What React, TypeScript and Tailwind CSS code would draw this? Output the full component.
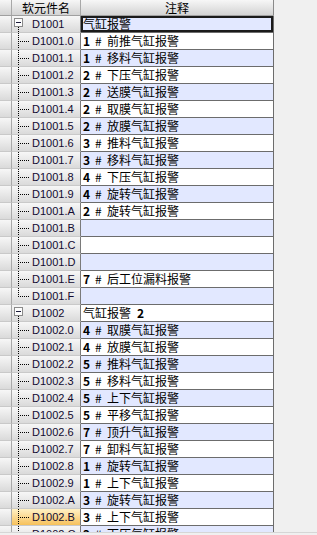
import React from "react";

type Row = { id: string; root?: boolean; last?: boolean; c: string; sel?: boolean };

const rows: Row[] = [
  { id: "D1001", root: true, c: "气缸报警" },
  { id: "D1001.0", c: "1 # 前推气缸报警" },
  { id: "D1001.1", c: "1 # 移料气缸报警" },
  { id: "D1001.2", c: "2 # 下压气缸报警" },
  { id: "D1001.3", c: "2 # 送膜气缸报警" },
  { id: "D1001.4", c: "2 # 取膜气缸报警" },
  { id: "D1001.5", c: "2 # 放膜气缸报警" },
  { id: "D1001.6", c: "3 # 推料气缸报警" },
  { id: "D1001.7", c: "3 # 移料气缸报警" },
  { id: "D1001.8", c: "4 # 下压气缸报警" },
  { id: "D1001.9", c: "4 # 旋转气缸报警" },
  { id: "D1001.A", c: "2 # 旋转气缸报警" },
  { id: "D1001.B", c: "" },
  { id: "D1001.C", c: "" },
  { id: "D1001.D", c: "" },
  { id: "D1001.E", c: "7 # 后工位漏料报警" },
  { id: "D1001.F", c: "", last: true },
  { id: "D1002", root: true, c: "气缸报警 2" },
  { id: "D1002.0", c: "4 # 取膜气缸报警" },
  { id: "D1002.1", c: "4 # 放膜气缸报警" },
  { id: "D1002.2", c: "5 # 推料气缸报警" },
  { id: "D1002.3", c: "5 # 移料气缸报警" },
  { id: "D1002.4", c: "5 # 上下气缸报警" },
  { id: "D1002.5", c: "5 # 平移气缸报警" },
  { id: "D1002.6", c: "7 # 顶升气缸报警" },
  { id: "D1002.7", c: "7 # 卸料气缸报警" },
  { id: "D1002.8", c: "1 # 旋转气缸报警" },
  { id: "D1002.9", c: "1 # 上下气缸报警" },
  { id: "D1002.A", c: "3 # 旋转气缸报警" },
  { id: "D1002.B", c: "3 # 上下气缸报警", sel: true },
  { id: "D1002.C", c: "2 # 下压气缸报警" },
];

function Connector({ row }: { row: Row }) {
  return (
    <svg width="20" height="16" viewBox="0 0 20 16" className="shrink-0" shapeRendering="crispEdges">
      {row.root ? (
        <>
          <line x1="6.5" y1="11" x2="6.5" y2="16" stroke="#000" strokeDasharray="1 1" />
          <rect x="2.5" y="2.5" width="8" height="8" fill="#fdfdfd" stroke="#8a8a8a" />
          <line x1="4" y1="6.5" x2="9" y2="6.5" stroke="#1a1a3a" />
        </>
      ) : (
        <>
          <line x1="6.5" y1="0" x2="6.5" y2={row.last ? 8.5 : 16} stroke="#000" strokeDasharray="1 1" />
          <line x1="8" y1="8.5" x2="17" y2="8.5" stroke="#000" strokeDasharray="1 1" />
        </>
      )}
    </svg>
  );
}

function Comment({ text }: { text: string }) {
  return (
    <span className="flex items-center leading-none">
      {text.split("").map((ch, i) =>
        /[\x00-\x7f]/.test(ch) ? (
          <span key={i} className={"inline-block w-[6px] text-center " + (/[0-9]/.test(ch) ? "font-bold" : "")}>
            {ch === " " ? "\u00a0" : ch}
          </span>
        ) : (
          <span key={i} className="inline-block w-[12px]">
            {ch}
          </span>
        )
      )}
    </span>
  );
}

export default function App() {
  return (
    <div className="w-[317px] h-[535px] bg-[#f0f0f0] flex flex-col overflow-hidden">
      <div className="h-[532px] overflow-hidden flex">
        <div className="w-[274px] shrink-0 flex flex-col">
          <div className="flex h-[16px] shrink-0 bg-linear-to-b from-[#f7f7f7] to-[#d3d3d3] border-b border-[#a0a0a0] text-[12px] leading-none text-black font-['Noto_Sans_CJK_SC',sans-serif]">
            <div className="w-[12px] border-r border-[#a8a8a8]" />
            <div className="w-[69px] border-r border-[#a8a8a8] flex items-center justify-center">软元件名</div>
            <div className="w-[193px] border-r border-[#8a8a8a] flex items-center justify-center">注释</div>
          </div>
          {rows.map((r, i) => (
            <div key={r.id} className="flex h-[17px] shrink-0">
              <div className="w-[12px] border-r border-b border-r-[#a8a8a8] border-b-[#c9c9c9] bg-linear-to-b from-[#f7f7f7] to-[#dadada]" />
              <div
                className={
                  "w-[69px] flex items-center border-r border-b border-r-[#7a7a7a] border-b-[#c9c9c9] " +
                  (r.sel ? "bg-linear-to-b from-[#fff1c4] to-[#f6c15a]" : "bg-linear-to-b from-[#f7f7f7] to-[#dadada]")
                }
              >
                <Connector row={r} />
                <span className="text-[11px] leading-none text-[#120a30] font-['Liberation_Sans',Arial,sans-serif] whitespace-nowrap">
                  {r.id}
                </span>
              </div>
              <div
                className={
                  "w-[193px] flex items-center border-r border-b border-[#6c6c6c] pl-[2px] text-[12px] text-black font-['Noto_Sans_CJK_SC',sans-serif] " +
                  (i % 2 === 0 ? "bg-[#e2e8ff] " : "bg-white ") +
                  (i === 0 ? "shadow-[inset_0_0_0_2px_#1a1a1a]" : "")
                }
              >
                <Comment text={r.c} />
              </div>
            </div>
          ))}
        </div>
        <div className="flex-1 bg-[#f0f0f0]" />
      </div>
      <div className="h-[3px] border-t border-[#d6d6d6] bg-[#f0f0f0]" />
    </div>
  );
}
